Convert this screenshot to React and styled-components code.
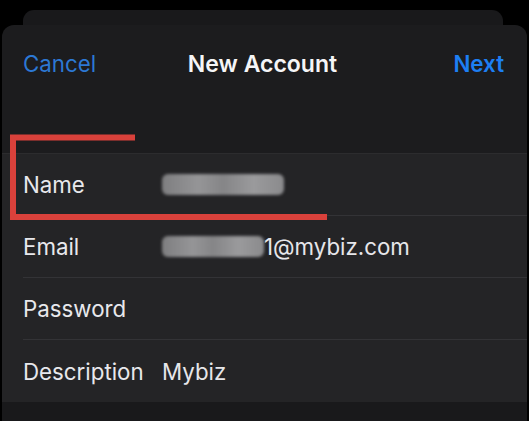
import React from 'react'
import styled, { createGlobalStyle } from 'styled-components'

const Global = createGlobalStyle`
  html, body { margin: 0; padding: 0; background: #000; }
  body { font-family: Inter, "Liberation Sans", sans-serif; }
`

const Screen = styled.div`
  position: relative;
  width: 529px;
  height: 421px;
  overflow: hidden;
  background: #000;
  padding-top: 10px;
  box-sizing: border-box;
  display: flex;
  flex-direction: column;
`

const BackCard = styled.div`
  height: 15px;
  margin: 0 26px 0 23px;
  background: #19191b;
  border-radius: 11px 11px 0 0;
`

const Sheet = styled.div`
  flex: 1;
  margin: 0 2px;
  background: #1c1c1e;
  border-radius: 12px 12px 0 0;
  display: flex;
  flex-direction: column;
`

const Header = styled.div`
  height: 128px;
  display: grid;
  grid-template-columns: 1fr auto 1fr;
  align-items: start;
  padding: 25px 23px 0 21px;
  box-sizing: border-box;
  font-size: 22.3px;
`

const NavButton = styled.span`
  color: ${p => (p.$strong ? '#1d7ff3' : '#2c78d4')};
  font-weight: ${p => (p.$strong ? 600 : 400)};
  justify-self: ${p => p.$end ? 'end' : 'start'};
`

const Title = styled.span`
  color: #f5f5f7;
  font-weight: 600;
  font-size: 23px;
  transform: translateX(-1px);
`

const List = styled.div`
  background: #242426;
  border-top: 1px solid #2c2c2e;
`

const Row = styled.div`
  height: 62px;
  display: flex;
  align-items: center;
  margin-left: 21px;
  border-bottom: ${p => (p.$last ? 'none' : '1px solid #333336')};
  box-sizing: border-box;
  font-size: 22.3px;
`

const Label = styled.span`
  width: 139px;
  color: #e8e8ec;
  flex-shrink: 0;
`

const Value = styled.span`
  color: #e6e6ea;
  display: flex;
  align-items: center;
`

const Smudge = styled.span`
  display: inline-block;
  width: ${p => p.$w}px;
  height: 21px;
  background: linear-gradient(90deg, #7e7e80, #959597 30%, #858587 50%, #9a9a9c 75%, #8a8a8c);
  border-radius: 6px;
  filter: blur(1.5px);
`

const Footer = styled.div`
  flex: 1;
  background: #19191b;
`

const Marker = styled.svg`
  position: absolute;
  left: 0;
  top: 0;
  pointer-events: none;
`

export default function App() {
  return (
    <>
      <Global />
      <Screen>
        <BackCard />
        <Sheet>
          <Header>
            <NavButton>Cancel</NavButton>
            <Title>New Account</Title>
            <NavButton $strong $end>Next</NavButton>
          </Header>
          <List>
            <Row>
              <Label>Name</Label>
              <Value><Smudge $w={122} /></Value>
            </Row>
            <Row>
              <Label>Email</Label>
              <Value><Smudge $w={102} />1@mybiz.com</Value>
            </Row>
            <Row>
              <Label>Password</Label>
            </Row>
            <Row $last>
              <Label>Description</Label>
              <Value>Mybiz</Value>
            </Row>
          </List>
          <Footer />
        </Sheet>
        <Marker width="529" height="421">
          <path d="M135 137.5 H13 V217 H327" fill="none" stroke="#d9413b" strokeWidth="6" />
        </Marker>
      </Screen>
    </>
  )
}
